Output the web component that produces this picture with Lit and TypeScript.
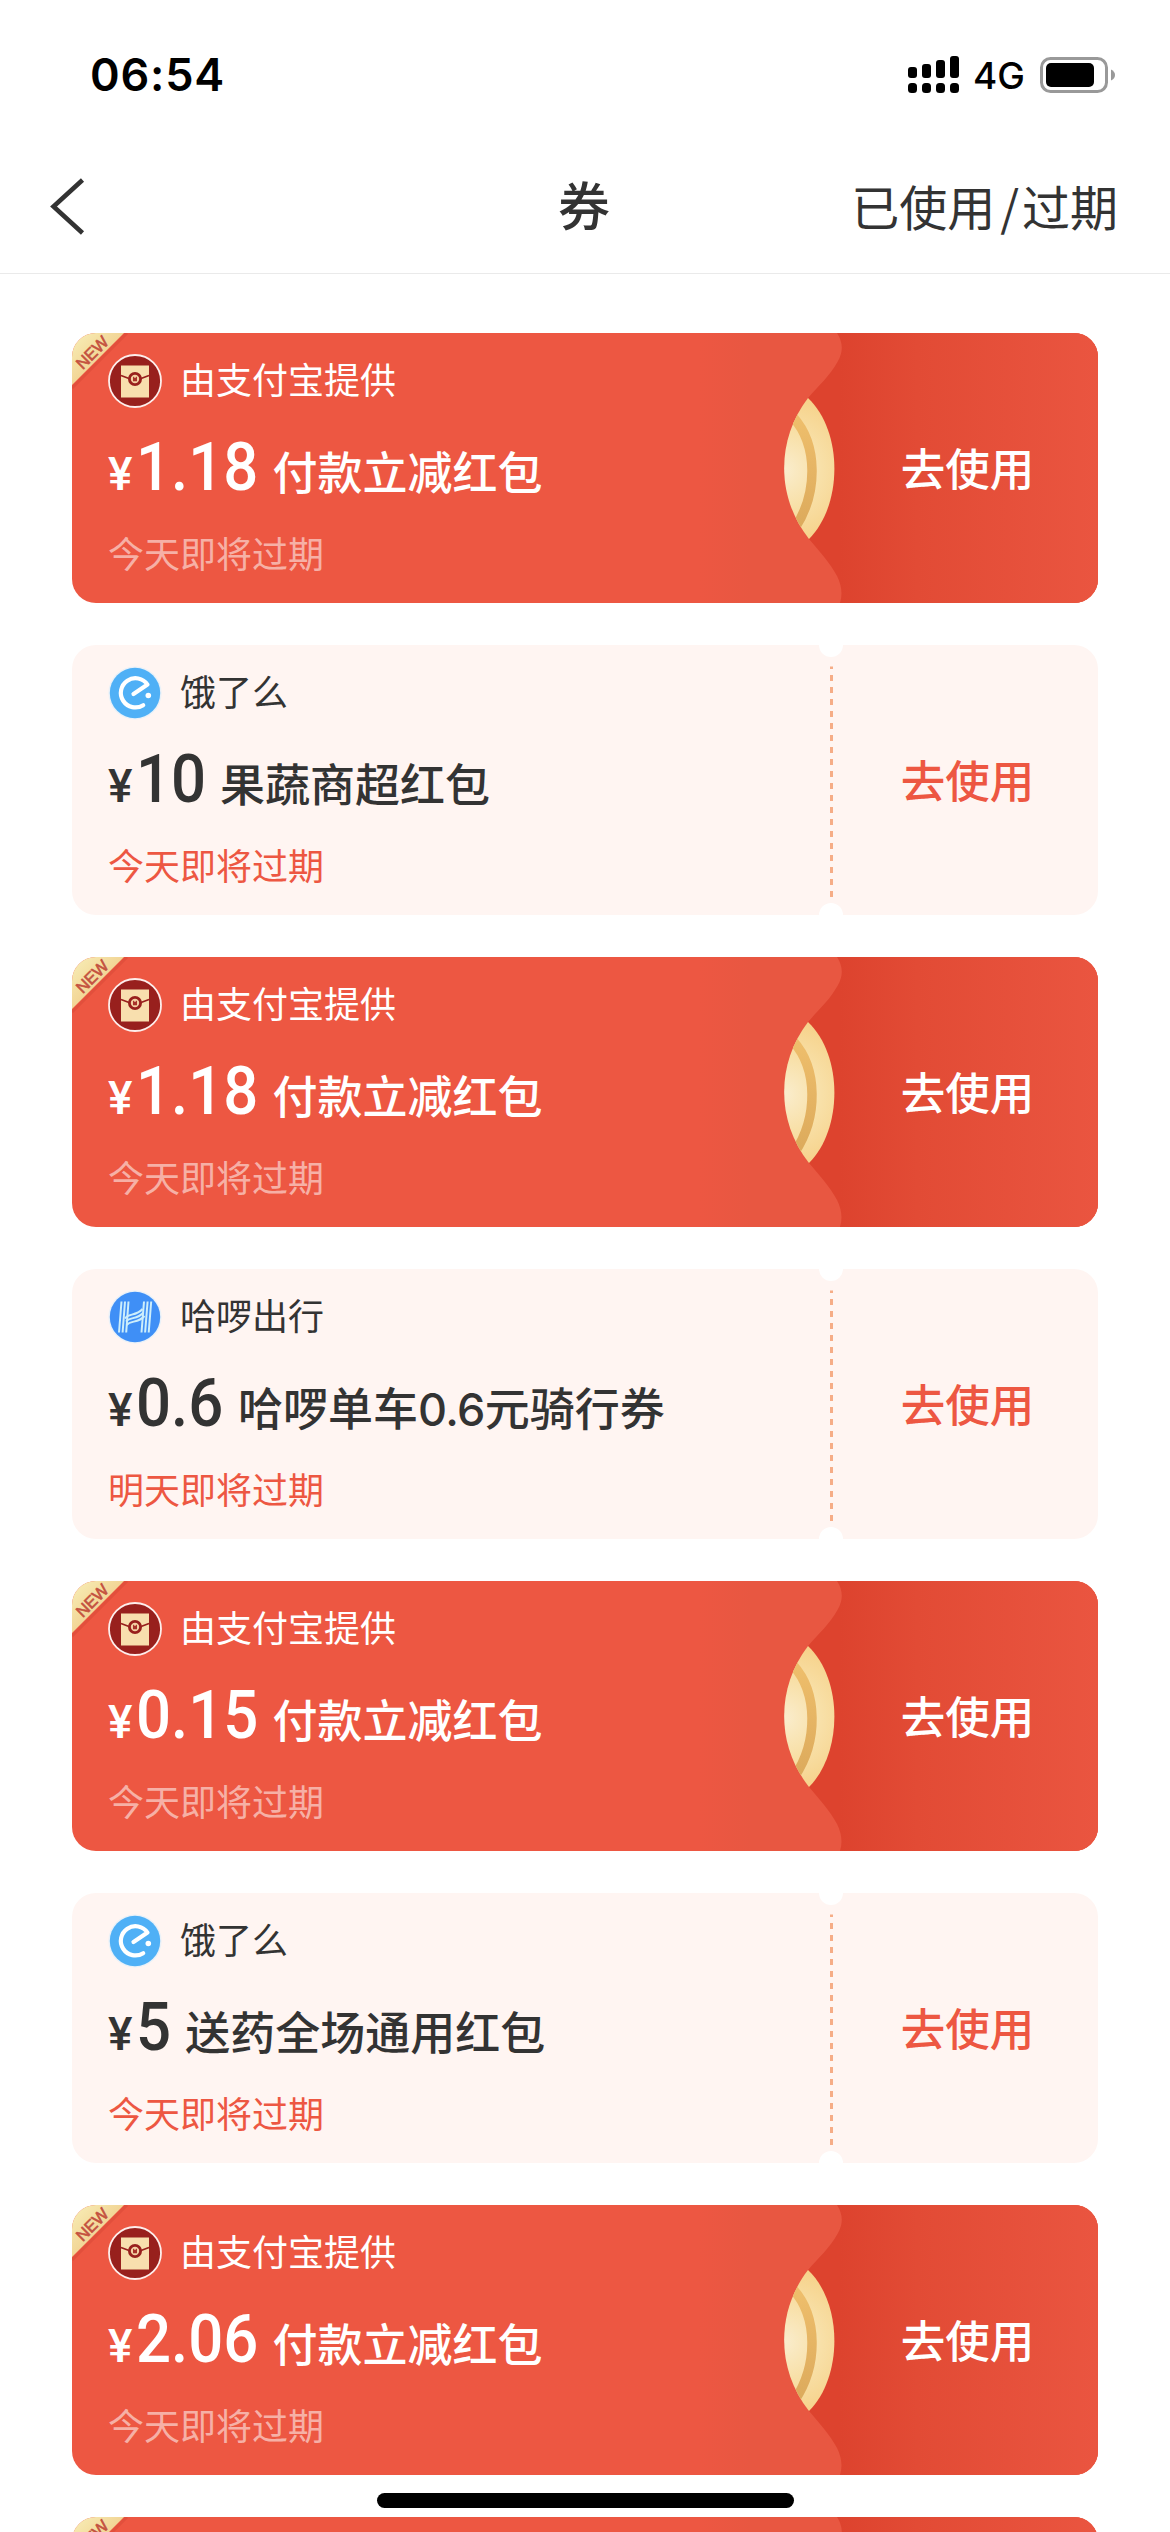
import { LitElement, html, css, svg } from "lit";
import { customElement, property } from "lit/decorators.js";
import { styleMap } from "lit/directives/style-map.js";

type Brand = "alipay" | "eleme" | "hello";
interface Coupon {
  brand: Brand;
  amount: string;
  title: string;
  expiry: string;
}

const NAMES: Record<Brand, string> = {
  alipay: "由支付宝提供",
  eleme: "饿了么",
  hello: "哈啰出行",
};

const COUPONS: Coupon[] = [
  { brand: "alipay", amount: "1.18", title: "付款立减红包", expiry: "今天即将过期" },
  { brand: "eleme", amount: "10", title: "果蔬商超红包", expiry: "今天即将过期" },
  { brand: "alipay", amount: "1.18", title: "付款立减红包", expiry: "今天即将过期" },
  { brand: "hello", amount: "0.6", title: "哈啰单车0.6元骑行券", expiry: "明天即将过期" },
  { brand: "alipay", amount: "0.15", title: "付款立减红包", expiry: "今天即将过期" },
  { brand: "eleme", amount: "5", title: "送药全场通用红包", expiry: "今天即将过期" },
  { brand: "alipay", amount: "2.06", title: "付款立减红包", expiry: "今天即将过期" },
];

/** Width of an amount set in condensed digits. */
const amountWidth = (s: string) =>
  [...s].reduce((w, ch) => w + (ch === "." ? 18 : 34.7), 0);

@customElement("brand-icon")
export class BrandIcon extends LitElement {
  @property() brand: Brand = "alipay";
  static styles = css`
    :host { display: block; width: 54px; height: 54px; }
    svg { display: block; }
  `;
  render() {
    const art = {
      alipay: svg`
        <circle cx="27" cy="27" r="26" fill="#98201d" stroke="#fdeeec" stroke-width="1.8"/>
        <rect x="13" y="11.5" width="28" height="32" fill="#f8dfae"/>
        <path d="M13 21.5L21 24.5M33 24.5L41 21.5" stroke="#98201d" stroke-width="1.8" fill="none"/>
        <circle cx="27" cy="25" r="5.6" fill="#f3cfa2" stroke="#98201d" stroke-width="2.8"/>
        <path d="M25 22.5v4.8h4v-4.8l-2 1.6z" fill="#a8322a"/>`,
      eleme: svg`
        <circle cx="27" cy="27" r="26.6" fill="#e9f1f8"/>
        <circle cx="27" cy="27" r="25.2" fill="#4fb0f6"/>
        <path d="M25.5 28L39.5 18.6A14.6 14.6 0 1 0 35.2 39.2" fill="none" stroke="#fff" stroke-width="4.2" stroke-linecap="round" stroke-linejoin="round"/>
        <circle cx="40.3" cy="29.5" r="2.8" fill="#fff"/>`,
      hello: svg`
        <circle cx="27" cy="27" r="26.6" fill="#e9f1f8"/>
        <circle cx="27" cy="27" r="25.2" fill="#3f8ff6"/>
        <g fill="none" stroke="#cdeefb" stroke-width="2">
          <path d="M13.500 11.500L11 42.500M17 11.500L14.600 42.500M20.500 11.500L18.200 42.500"/>
          <path d="M36 11.500L33.500 42.500M39.600 11.500L37.100 42.500M43.200 11.500L40.700 42.500"/>
          <path d="M17 28.500C20 23 28 26.500 34.500 19"/>
          <path d="M18 31.500C22 26.500 29 30 35.500 22.500"/>
          <path d="M18.500 35C23 30 30 33.500 36.500 26"/>
        </g>`,
    }[this.brand];
    return html`<svg width="54" height="54" viewBox="0 0 54 54">${art}</svg>`;
  }
}

@customElement("coupon-card")
export class CouponCard extends LitElement {
  @property({ attribute: false }) coupon!: Coupon;
  static styles = css`
    :host { display: block; flex: none; }
    .card {
      position: relative;
      display: grid;
      grid-template-columns: 764px 262px;
      height: 270px;
      border-radius: 24px;
      overflow: hidden;
      background: #fff5f2;
      color: #333;
    }
    .red { background: #ed5742; color: #fff; }
    .art { position: absolute; right: 0; top: 0; display: block; }
    .ribbon { position: absolute; left: 0; top: 0; display: block; }
    .info { position: relative; padding: 21px 0 0 36px; }
    .provider { display: flex; align-items: center; height: 54px; gap: 18px; font-size: 36px; line-height: 54px; }
    .provider span { padding-bottom: 5px; line-height: 49px; }
    .offer { display: flex; align-items: baseline; height: 90px; margin-top: 15px; line-height: 90px; white-space: nowrap; }
    .yen { font: 500 46px/90px Roboto, sans-serif; width: 28px; }
    .amount {
      font: 500 66px/90px Roboto, sans-serif;
      transform: scaleX(0.935);
      transform-origin: left;
    }
    .title { margin-left: 14.5px; font-size: 45px; font-weight: 500; }
    .latin { font-family: Inter, sans-serif; letter-spacing: -0.6px; }
    .expiry { margin-top: 12px; font-size: 36px; line-height: 54px; color: #ed5742; }
    .red .expiry { color: rgba(255, 255, 255, 0.55); }
    .use {
      position: relative;
      display: flex; align-items: center; justify-content: center;
      padding: 0 0 4px 1px;
      font-size: 44.5px; font-weight: 500; color: #ed5742;
    }
    .red .use { color: #fff; }
  `;
  private redArt() {
    return svg`<svg class="art" width="398" height="270" viewBox="0 0 398 270">
      <defs>
        <linearGradient id="base" x1="0" x2="1"><stop offset="0" stop-color="#ed5742"/><stop offset=".13" stop-color="#e85741"/><stop offset="1" stop-color="#e85741"/></linearGradient>
        <linearGradient id="right" gradientUnits="userSpaceOnUse" x1="140" y1="0" x2="398" y2="0"><stop offset="0" stop-color="#dd432e"/><stop offset=".3" stop-color="#e24b35"/><stop offset="1" stop-color="#ea5540"/></linearGradient>
        <radialGradient id="gold" gradientUnits="userSpaceOnUse" cx="84" cy="137" r="75"><stop offset="0" stop-color="#faedcd"/><stop offset=".5" stop-color="#f8e0a8"/><stop offset="1" stop-color="#f6d28a"/></radialGradient>
        <linearGradient id="ring" gradientUnits="userSpaceOnUse" x1="0" x2="0" y1="80" y2="195"><stop offset="0" stop-color="#efbf6c"/><stop offset="1" stop-color="#dcaa5c"/></linearGradient>
        <clipPath id="lens"><path d="M108 65C143 98 143 172 109 206C76 164 76 107 108 65Z"/></clipPath>
      </defs>
      <rect width="398" height="270" fill="url(#base)"/>
      <path d="M137 0Q146 14 138 28C129 44 119 52 108 65L80 135L109 206C120 219 130 230 137 243Q144 257 140 270H398V0Z" fill="url(#right)"/>
      <path d="M108 65C76 107 76 164 109 206L62 206V65Z" fill="#e85741"/>
      <g clip-path="url(#lens)">
        <rect x="72" y="60" width="70" height="150" fill="url(#gold)"/>
        <path d="M93 84C118 112 118 160 95 195" fill="none" stroke="url(#ring)" stroke-width="9.500"/>
      </g>
    </svg>`;
  }
  private ribbon() {
    return svg`<svg class="ribbon" width="60" height="60" viewBox="0 0 60 60">
      <defs><linearGradient id="rib" x1="0" y1="0" x2="1" y2="1"><stop offset="0" stop-color="#f8efb8"/><stop offset=".5" stop-color="#f2d596"/></linearGradient></defs>
      <path d="M0 55L55 0" stroke="#c9402e" stroke-opacity=".3" stroke-width="3"/>
      <path d="M0 0H52L0 52Z" fill="url(#rib)"/>
      <text x="20.500" y="25.500" transform="rotate(-45 20 20)" text-anchor="middle" font-family="Liberation Sans, sans-serif" font-size="16.500" fill="#c4513f" stroke="#c4513f" stroke-width=".6">NEW</text>
    </svg>`;
  }
  private plainArt() {
    return svg`<svg class="art" width="398" height="270" viewBox="0 0 398 270">
      <circle cx="131" cy="0" r="12" fill="#fff"/><circle cx="131" cy="270" r="12" fill="#fff"/>
      <path d="M131.500 21.500V252" stroke="#f6ad87" stroke-width="3" stroke-dasharray="6" stroke-dashoffset="3.500"/>
    </svg>`;
  }
  render() {
    const c = this.coupon;
    const red = c.brand === "alipay";
    const title = c.title
      .split(/([\d.]+)/)
      .map((part) => (/^[\d.]+$/.test(part) ? html`<span class="latin">${part}</span>` : part));
    return html`<div class="card ${red ? "red" : ""}">
      ${red ? this.redArt() : this.plainArt()}
      ${red ? this.ribbon() : ""}
      <div class="info">
        <div class="provider"><brand-icon .brand=${c.brand}></brand-icon><span>${NAMES[c.brand]}</span></div>
        <div class="offer"><span class="yen">¥</span><span class="amount" style=${styleMap({ width: `${amountWidth(c.amount)}px` })}>${c.amount}</span><span class="title">${title}</span></div>
        <div class="expiry">${c.expiry}</div>
      </div>
      <div class="use">去使用</div>
    </div>`;
  }
}

@customElement("app-root")
export class AppRoot extends LitElement {
  static styles = css`
    :host {
      position: relative;
      display: flex; flex-direction: column;
      width: 1170px; height: 2532px;
      overflow: hidden;
      background: #fff; color: #333;
      font-family: "Noto Sans CJK SC", sans-serif;
    }
    .status { flex: none; display: flex; align-items: center; justify-content: space-between; box-sizing: border-box; height: 141px; padding: 9px 54px 0 90px; color: #000; }
    .time { font: 600 45px/54px Inter, sans-serif; letter-spacing: 0.8px; }
    .indicators { display: flex; align-items: center; }
    .net { font: 500 37px/44px Inter, sans-serif; margin: 2px 15px 0 13.5px; }
    .indicators svg { display: block; }
    .nav { flex: none; display: grid; grid-template-columns: 1fr auto 1fr; align-items: center; box-sizing: border-box; height: 133px; padding: 0 52px 4px 50px; border-bottom: 1px solid #eaeaea; }
    .nav svg { display: block; }
    .heading { font-size: 52px; line-height: 70px; font-weight: 500; padding-bottom: 3px; }
    .history { justify-self: end; font-size: 48px; line-height: 70px; padding-bottom: 1px; }
    .slash { margin: 0 3px 0 5px; }
    .list { display: flex; flex-direction: column; gap: 42px; padding: 59px 72px 0; }
    .home { position: absolute; left: 377px; top: 2493px; width: 417px; height: 15px; border-radius: 8px; background: #000; }
  `;
  render() {
    return html`
      <div class="status">
        <div class="time">06:54</div>
        <div class="indicators">
          <svg width="52" height="38" viewBox="0 0 52 38">
            ${[0, 14, 28, 42].map((x, i) => {
              const top = [11, 8, 4, 0][i];
              return svg`<rect x=${x} y=${top} width="9" height=${22 - top} rx="3"/><rect x=${x} y="27" width="9" height="10" rx="3.500"/>`;
            })}
          </svg>
          <span class="net">4G</span>
          <svg width="76" height="37" viewBox="0 0 76 37">
            <rect x="1.500" y="1.500" width="65" height="33" rx="9" fill="none" stroke="#999" stroke-width="3"/>
            <rect x="6" y="6" width="48" height="24" rx="5"/>
            <path d="M71 12.500Q75 14.500 75 18T71 23.500Z" fill="#999"/>
          </svg>
        </div>
      </div>
      <div class="nav">
        <svg width="40" height="60" viewBox="0 0 40 60"><path d="M32.500 5L3.500 31.500L32.500 58" fill="none" stroke="#333" stroke-width="4.600"/></svg>
        <div class="heading">券</div>
        <div class="history">已使用<span class="slash">/</span>过期</div>
      </div>
      <div class="list">
        ${[...COUPONS, COUPONS[0]].map((c) => html`<coupon-card .coupon=${c}></coupon-card>`)}
      </div>
      <div class="home"></div>
    `;
  }
}
